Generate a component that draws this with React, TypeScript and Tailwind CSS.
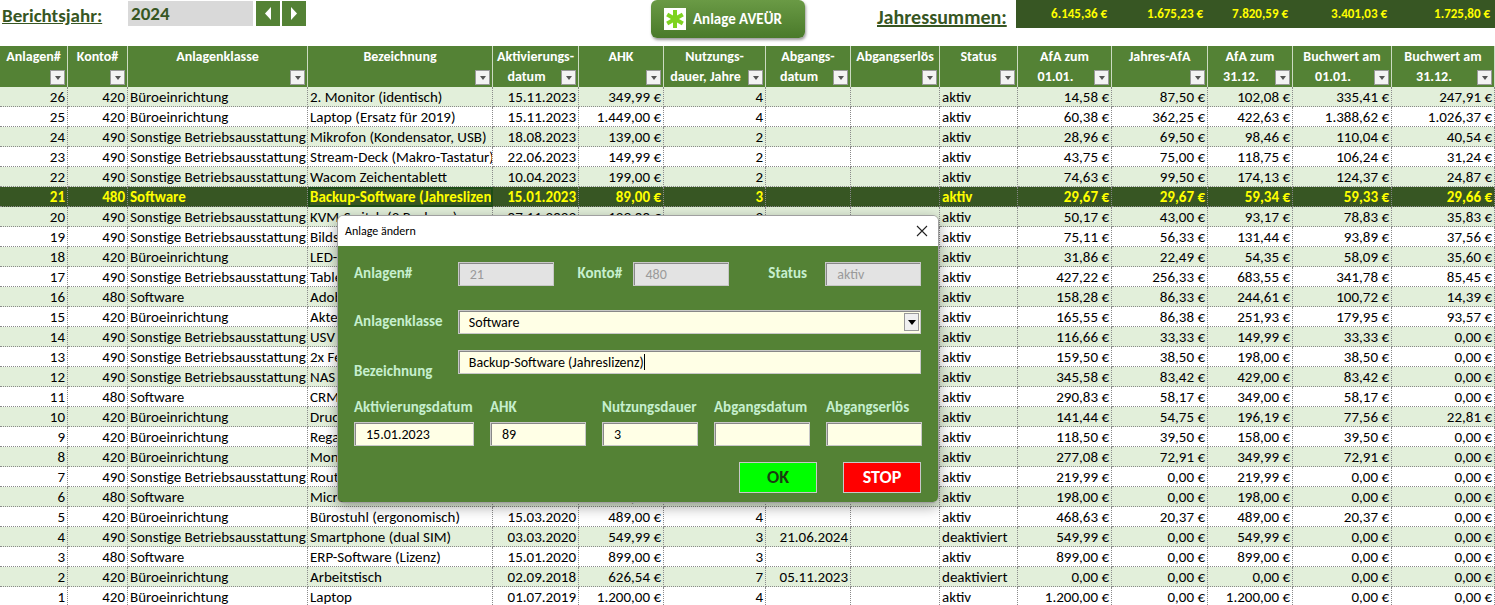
import React from "react"

const W = [68, 60, 180, 185, 86, 85, 102, 85, 89, 78, 94, 96, 85, 99, 103]
const HEAD = [
  ["Anlagen#", ""], ["Konto#", ""], ["Anlagenklasse", ""], ["Bezeichnung", ""],
  ["Aktivierungs-", "datum"], ["AHK", ""], ["Nutzungs-", "dauer, Jahre"], ["Abgangs-", "datum"],
  ["Abgangserlös", ""], ["Status", ""], ["AfA zum", "01.01."], ["Jahres-AfA", ""],
  ["AfA zum", "31.12."], ["Buchwert am", "01.01."], ["Buchwert am", "31.12."],
]
const RIGHT = [0, 1, 4, 5, 6, 7, 8, 10, 11, 12, 13, 14]
const B = "Büroeinrichtung", S = "Sonstige Betriebsausstattung", SW = "Software"

const ROWS: string[][] = [
  ["26", "420", B, "2. Monitor (identisch)", "15.11.2023", "349,99 €", "4", "", "", "aktiv", "14,58 €", "87,50 €", "102,08 €", "335,41 €", "247,91 €"],
  ["25", "420", B, "Laptop (Ersatz für 2019)", "15.11.2023", "1.449,00 €", "4", "", "", "aktiv", "60,38 €", "362,25 €", "422,63 €", "1.388,62 €", "1.026,37 €"],
  ["24", "490", S, "Mikrofon (Kondensator, USB)", "18.08.2023", "139,00 €", "2", "", "", "aktiv", "28,96 €", "69,50 €", "98,46 €", "110,04 €", "40,54 €"],
  ["23", "490", S, "Stream-Deck (Makro-Tastatur)", "22.06.2023", "149,99 €", "2", "", "", "aktiv", "43,75 €", "75,00 €", "118,75 €", "106,24 €", "31,24 €"],
  ["22", "490", S, "Wacom Zeichentablett", "10.04.2023", "199,00 €", "2", "", "", "aktiv", "74,63 €", "99,50 €", "174,13 €", "124,37 €", "24,87 €"],
  ["21", "480", SW, "Backup-Software (Jahreslizenz)", "15.01.2023", "89,00 €", "3", "", "", "aktiv", "29,67 €", "29,67 €", "59,34 €", "59,33 €", "29,66 €"],
  ["20", "490", S, "KVM-Switch (2 Rechner)", "07.11.2023", "129,00 €", "3", "", "", "aktiv", "50,17 €", "43,00 €", "93,17 €", "78,83 €", "35,83 €"],
  ["19", "490", S, "Bildschirmhalterung", "01.05.2022", "168,99 €", "3", "", "", "aktiv", "75,11 €", "56,33 €", "131,44 €", "93,89 €", "37,56 €"],
  ["18", "420", B, "LED-Schreibtischlampe", "01.03.2022", "89,95 €", "4", "", "", "aktiv", "31,86 €", "22,49 €", "54,35 €", "58,09 €", "35,60 €"],
  ["17", "490", S, "Tablet", "01.09.2021", "769,00 €", "3", "", "", "aktiv", "427,22 €", "256,33 €", "683,55 €", "341,78 €", "85,45 €"],
  ["16", "480", SW, "Adobe Creative Cloud", "01.08.2021", "259,00 €", "3", "", "", "aktiv", "158,28 €", "86,33 €", "244,61 €", "100,72 €", "14,39 €"],
  ["15", "420", B, "Aktenschrank", "01.04.2021", "345,50 €", "4", "", "", "aktiv", "165,55 €", "86,38 €", "251,93 €", "179,95 €", "93,57 €"],
  ["14", "490", S, "USV", "01.03.2021", "149,99 €", "3", "", "", "aktiv", "116,66 €", "33,33 €", "149,99 €", "33,33 €", "0,00 €"],
  ["13", "490", S, "2x Festplatte", "01.02.2021", "198,00 €", "3", "", "", "aktiv", "159,50 €", "38,50 €", "198,00 €", "38,50 €", "0,00 €"],
  ["12", "490", S, "NAS", "01.02.2021", "429,00 €", "3", "", "", "aktiv", "345,58 €", "83,42 €", "429,00 €", "83,42 €", "0,00 €"],
  ["11", "480", SW, "CRM-Software", "01.01.2021", "349,00 €", "3", "", "", "aktiv", "290,83 €", "58,17 €", "349,00 €", "58,17 €", "0,00 €"],
  ["10", "420", B, "Drucker", "01.10.2020", "219,00 €", "4", "", "", "aktiv", "141,44 €", "54,75 €", "196,19 €", "77,56 €", "22,81 €"],
  ["9", "420", B, "Regal", "01.09.2020", "158,00 €", "4", "", "", "aktiv", "118,50 €", "39,50 €", "158,00 €", "39,50 €", "0,00 €"],
  ["8", "420", B, "Monitor", "01.07.2020", "349,99 €", "4", "", "", "aktiv", "277,08 €", "72,91 €", "349,99 €", "72,91 €", "0,00 €"],
  ["7", "490", S, "Router", "01.06.2020", "219,99 €", "3", "", "", "aktiv", "219,99 €", "0,00 €", "219,99 €", "0,00 €", "0,00 €"],
  ["6", "480", SW, "Microsoft Office", "01.04.2020", "198,00 €", "3", "", "", "aktiv", "198,00 €", "0,00 €", "198,00 €", "0,00 €", "0,00 €"],
  ["5", "420", B, "Bürostuhl (ergonomisch)", "15.03.2020", "489,00 €", "4", "", "", "aktiv", "468,63 €", "20,37 €", "489,00 €", "20,37 €", "0,00 €"],
  ["4", "490", S, "Smartphone (dual SIM)", "03.03.2020", "549,99 €", "3", "21.06.2024", "", "deaktiviert", "549,99 €", "0,00 €", "549,99 €", "0,00 €", "0,00 €"],
  ["3", "480", SW, "ERP-Software (Lizenz)", "15.01.2020", "899,00 €", "3", "", "", "aktiv", "899,00 €", "0,00 €", "899,00 €", "0,00 €", "0,00 €"],
  ["2", "420", B, "Arbeitstisch", "02.09.2018", "626,54 €", "7", "05.11.2023", "", "deaktiviert", "0,00 €", "0,00 €", "0,00 €", "0,00 €", "0,00 €"],
  ["1", "420", B, "Laptop", "01.07.2019", "1.200,00 €", "4", "", "", "aktiv", "1.200,00 €", "0,00 €", "1.200,00 €", "0,00 €", "0,00 €"],
]

const font = { fontFamily: "Carlito, 'Liberation Sans Narrow', 'DejaVu Sans Condensed', sans-serif" }

function Filter() {
  return (
    <span className="absolute right-[2px] bottom-[2px] w-[15px] h-[15px] bg-[#f3f3f3] border border-[#9a9a9a] flex items-center justify-center">
      <span className="w-0 h-0 border-l-[3px] border-r-[3px] border-t-[4px] border-l-transparent border-r-transparent border-t-[#555]" />
    </span>
  )
}

function Field({ w, value, grey }: { w: number; value: string; grey?: boolean }) {
  return (
    <div
      style={{ width: w }}
      className={`h-[24px] border border-[#c8c8c8] shadow-[inset_1px_1px_0_#888] flex items-center px-[11px] text-[14px] ${grey ? "bg-[#e3e3e3] text-[#9a9a9a]" : "bg-[#ffffe6] text-black"}`}
    >
      {value}
    </div>
  )
}

function Dialog() {
  const lab = "text-[#c6efce] font-bold text-[15px]"
  return (
    <div className="absolute left-[337px] top-[215px] w-[602px] h-[288px] rounded-[6px] overflow-hidden shadow-[0_4px_14px_rgba(0,0,0,0.35)] border border-[#a0a0a0]">
      <div className="h-[30px] bg-white flex items-center justify-between px-[7px] text-[12px] text-black">
        <span>Anlage ändern</span>
        <svg width="12" height="12" viewBox="0 0 12 12" className="mr-[3px]"><path d="M1 1 L11 11 M11 1 L1 11" stroke="#222" strokeWidth="1.1" /></svg>
      </div>
      <div className="bg-[#548235] h-[258px] pl-[16px] pr-[17px] pt-[16px]">
        <div className="flex items-start h-[24px]">
          <span className={`${lab} w-[104px]`}>Anlagen#</span>
          <Field w={96} value="21" grey />
          <span className={`${lab} ml-[24px] w-[56px]`}>Konto#</span>
          <Field w={96} value="480" grey />
          <span className={`${lab} ml-[39px] w-[57px]`}>Status</span>
          <Field w={96} value="aktiv" grey />
        </div>
        <div className="flex items-start h-[24px] mt-[24px]">
          <span className={`${lab} w-[104px]`}>Anlagenklasse</span>
          <div className="w-[464px] h-[24px] bg-[#ffffe6] border border-[#c8c8c8] shadow-[inset_1px_1px_0_#888] flex items-center pl-[10px] text-[14px] justify-between">
            <span>Software</span>
            <span className="w-[15px] h-[18px] mr-[1px] bg-[#f0f0f0] border border-[#999] flex items-center justify-center">
              <span className="w-0 h-0 border-l-[4px] border-r-[4px] border-t-[5px] border-l-transparent border-r-transparent border-t-black" />
            </span>
          </div>
        </div>
        <div className="flex items-end h-[32px] mt-[16px]">
          <span className={`${lab} w-[104px]`}>Bezeichnung</span>
          <div className="w-[464px] h-[24px] mb-[8px] self-start bg-[#ffffe6] border border-[#c8c8c8] shadow-[inset_1px_1px_0_#888] flex items-center pl-[10px] text-[14px]">
            Backup-Software (Jahreslizenz)<span className="w-px h-[16px] bg-black" />
          </div>
        </div>
        <div className="flex mt-[14px] gap-[16px]">
          {[["Aktivierungsdatum", "15.01.2023", 120], ["AHK", "89", 96], ["Nutzungsdauer", "3", 96], ["Abgangsdatum", "", 96], ["Abgangserlös", "", 96]].map(([l, v, w], i) => (
            <div key={i} className={i === 0 ? "w-[120px]" : "w-[96px]"}>
              <div className={`${lab} h-[20px] whitespace-nowrap`}>{l}</div>
              <div className="mt-[6px]"><Field w={w as number} value={v as string} /></div>
            </div>
          ))}
        </div>
        <div className="flex justify-end gap-[26px] mt-[16px]">
          <div className="w-[78px] h-[31px] bg-[#00ff00] border border-[#c8c8c8] flex items-center justify-center font-bold text-[18px] text-[#1a3d10]">OK</div>
          <div className="w-[78px] h-[31px] bg-[#ff0000] border border-[#c8c8c8] flex items-center justify-center font-bold text-[18px] text-white">STOP</div>
        </div>
      </div>
    </div>
  )
}

export default function App() {
  return (
    <div className="relative w-[1495px] h-[605px] overflow-hidden bg-white text-[15px] text-black" style={font}>
      {/* Top bar */}
      <div className="h-[46px] flex items-start">
        <span className="ml-[2px] mt-[2px] text-[19px] font-bold text-[#375623] underline w-[126px]">Berichtsjahr:</span>
        <div className="mt-[1px] w-[125px] h-[25px] bg-[#d9d9d9] text-[19px] font-bold text-[#375623] pl-[3px] leading-[25px]">2024</div>
        <div className="mt-[1px] ml-[3px] flex gap-[2px]">
          {["M8 1 L2 7.5 L8 14 Z", "M2 1 L8 7.5 L2 14 Z"].map((d, i) => (
            <div key={i} className="w-[24px] h-[25px] bg-[#548235] flex items-center justify-center">
              <svg width="10" height="15" viewBox="0 0 10 15"><path d={d} fill="white" /></svg>
            </div>
          ))}
        </div>
        <div className="ml-[345px] w-[154px] h-[38px] rounded-[6px] bg-gradient-to-b from-[#6a9a45] to-[#4a7a2a] shadow-[1px_2px_3px_rgba(0,0,0,0.4)] flex items-center pl-[13px] gap-[7px]">
          <div className="w-[22px] h-[22px] bg-white flex items-center justify-center">
            <svg width="20" height="20" viewBox="0 0 20 20">
              <g stroke="#7ed321" strokeWidth="4" strokeLinecap="butt">
                <path d="M10 1 V19" /><path d="M2.2 5.5 L17.8 14.5" /><path d="M2.2 14.5 L17.8 5.5" />
              </g>
            </svg>
          </div>
          <span className="text-white font-bold text-[15px]">Anlage AVEÜR</span>
        </div>
        <span className="ml-[72px] mt-[2px] text-[20px] font-bold text-[#375623] underline w-[139px]">Jahressummen:</span>
        <div className="h-[28px] flex-1 bg-[#375623] flex text-[#ffff00] font-bold text-[13px] leading-[28px]">
          {["6.145,36 €", "1.675,23 €", "7.820,59 €", "3.401,03 €", "1.725,80 €"].map((v, i) => (
            <span key={i} style={{ width: W[10 + i] }} className="text-right pr-[3px]">{v}</span>
          ))}
        </div>
      </div>
      {/* Header */}
      <div className="flex h-[41px] bg-[#548235]">
        {HEAD.map(([a, b], i) => (
          <div key={i} style={{ width: W[i] }} className="relative border-r border-white/70 text-white font-bold text-[14px] text-center leading-[20px] pt-[1px] whitespace-nowrap overflow-hidden">
            <div>{a}</div>
            <div className="pr-[18px]">{b}</div>
            <Filter />
          </div>
        ))}
      </div>
      {/* Rows */}
      {ROWS.map((r, ri) => {
        const sel = r[0] === "21"
        const bg = sel ? "bg-[#375623] text-[#ffff00] font-bold" : ri % 2 === 0 ? "bg-[#e2efda]" : "bg-white"
        return (
          <div key={ri} className={`flex h-[20px] leading-[20px] ${bg}`}>
            {r.map((c, ci) => (
              <div
                key={ci}
                style={{ width: W[ci] }}
                className={`border-r border-b border-dotted border-[#8a8a8a] px-[2px] whitespace-nowrap overflow-hidden ${RIGHT.includes(ci) ? "text-right" : "text-left"} ${sel && ci === 3 ? "outline outline-2 outline-[#1e4d16] -outline-offset-2" : ""}`}
              >
                {c}
              </div>
            ))}
          </div>
        )
      })}
      <Dialog />
    </div>
  )
}
